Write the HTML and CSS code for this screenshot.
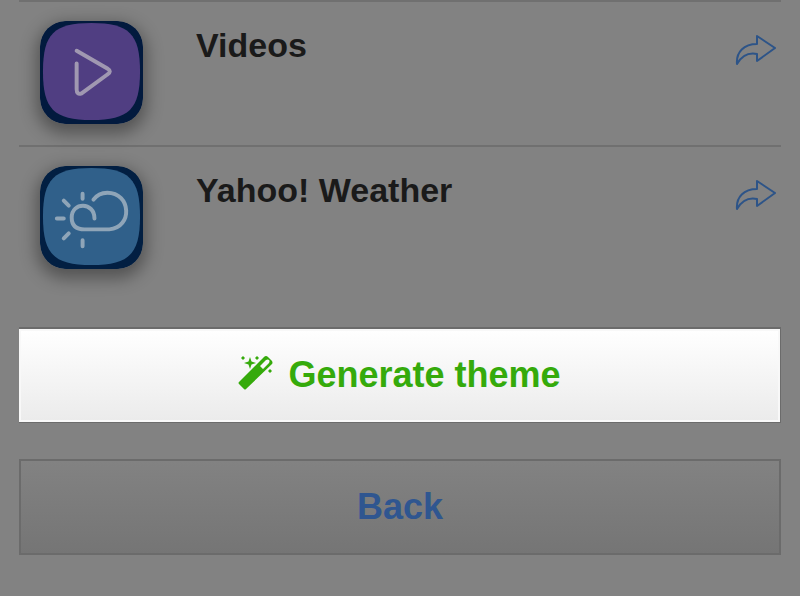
FILE: index.html
```
<!DOCTYPE html>
<html lang="en">
<head>
    <meta charset="utf-8">
    <title>Generate theme</title>
    <link rel="stylesheet" href="styles.css">
</head>
<body>
    <ul class="app-list">
        <li class="app">
            <svg class="app-icon" viewBox="0 0 104 104" aria-hidden="true">
                <rect x="0" y="0" width="104" height="104" rx="25" fill="#021a3e"/>
                <path d="M52 2C90 2 101 13 101 51S90 100 52 100 3 89 3 51 14 2 52 2Z" fill="#503e82"/>
                <path d="M37 30L68 48Q73 51 68 54L42 73Q37 75 37 69V43" fill="none" stroke="#a098b1" stroke-width="4" stroke-linecap="round" stroke-linejoin="round"/>
            </svg>
            <span class="app-name">Videos</span>
            <a href="#videos" class="share" aria-label="Share Videos">
                <svg viewBox="0 0 42 34" aria-hidden="true">
                    <path d="M22 2L40 14 22 27V20C12 18 6 23 2 30 1 18 9 10 22 10Z"/>
                </svg>
            </a>
        </li>
        <li class="app">
            <svg class="app-icon" viewBox="0 0 104 104" aria-hidden="true">
                <rect x="0" y="0" width="104" height="104" rx="25" fill="#021f42"/>
                <path d="M52 2C90 2 101 13 101 51S90 100 52 100 3 89 3 51 14 2 52 2Z" fill="#30608a"/>
                <g fill="none" stroke="#8fa5b8" stroke-width="4" stroke-linecap="round">
                    <path d="M55 53C55 36 32 36 32 52Q32 64 45 64H70C94 62 92 27 68 27Q59 27 54 34"/>
                    <path d="M43 28V33M24 35L29 40M17 53H24M24 73L29 68M43 75V81"/>
                </g>
            </svg>
            <span class="app-name">Yahoo! Weather</span>
            <a href="#weather" class="share" aria-label="Share Yahoo! Weather">
                <svg viewBox="0 0 42 34" aria-hidden="true">
                    <path d="M22 2L40 14 22 27V20C12 18 6 23 2 30 1 18 9 10 22 10Z"/>
                </svg>
            </a>
        </li>
    </ul>
    <div class="actions">
        <button type="button" class="btn btn-generate">
            <svg class="wand" viewBox="0 0 36 36" aria-hidden="true">
                <path fill-rule="evenodd" d="M1 27L26 2Q28 0 30 2L34 6Q35 8 34 9L8 34Q7 35 6 34L1 29Q0 28 1 27ZM22 11L25 14 31 8Q32 6 31 5 30 4 28 5Z"/>
                <path d="M12 2L13.500 6.500 18 8 13.500 9.500 12 14 10.500 9.500 6 8 10.500 6.500Z"/>
                <path d="M5 1L7 3 5 5 3 3ZM19 1L21 3 19 5 17 3ZM32 14L34 16 32 18 30 16Z"/>
            </svg>
            Generate theme
        </button>
        <button type="button" class="btn btn-back">Back</button>
    </div>
</body>
</html>
```

FILE: styles.css
```
body {
    margin: 0;
    padding: 0 19px;
    background-color: #828282;
    color: #1a1a1a;
    font-family: "Liberation Sans", Arial, sans-serif;
}
.app-list {
    list-style-type: none;
    margin: 0;
    padding: 0;
}
.app {
    display: flex;
    align-items: flex-start;
    box-sizing: border-box;
    min-height: 145px;
    padding: 19px 4px 18px 21px;
    border-top: 2px solid #707070;
}
.app-icon {
    width: 103px;
    height: 103px;
    border-radius: 26px;
    box-shadow: 0 6px 16px 4px rgba(0, 0, 0, 0.35);
}
.app-name {
    flex: 1;
    margin-left: 53px;
    padding-top: 4px;
    font-size: 34px;
    font-weight: bold;
    line-height: 40px;
}
.share {
    margin-top: 13px;
}
.share svg {
    display: block;
    width: 42px;
    height: 34px;
    fill: none;
    stroke: #2d5488;
    stroke-width: 2;
    stroke-linejoin: round;
}
.actions {
    display: flex;
    flex-direction: column;
    gap: 36px;
    margin-top: 37px;
    padding-bottom: 40px;
}
.btn {
    display: flex;
    justify-content: center;
    align-items: center;
    gap: 14px;
    width: 100%;
    min-height: 96px;
    padding: 0;
    border: 2px solid #6b6b6b;
    font-family: inherit;
    font-size: 36px;
    font-weight: bold;
}
.btn-generate {
    padding-bottom: 2px;
    border-width: 2px 1px 1px 0;
    background: linear-gradient(#ffffff, #ebebeb);
    box-shadow: inset 0 0 0 2px #f8f8f8;
    color: #35aa0b;
}
.btn-back {
    background: linear-gradient(#828282, #757575);
    color: #2f5690;
}
.wand {
    width: 36px;
    height: 36px;
    margin-bottom: 4px;
    fill: #35aa0b;
}
```
